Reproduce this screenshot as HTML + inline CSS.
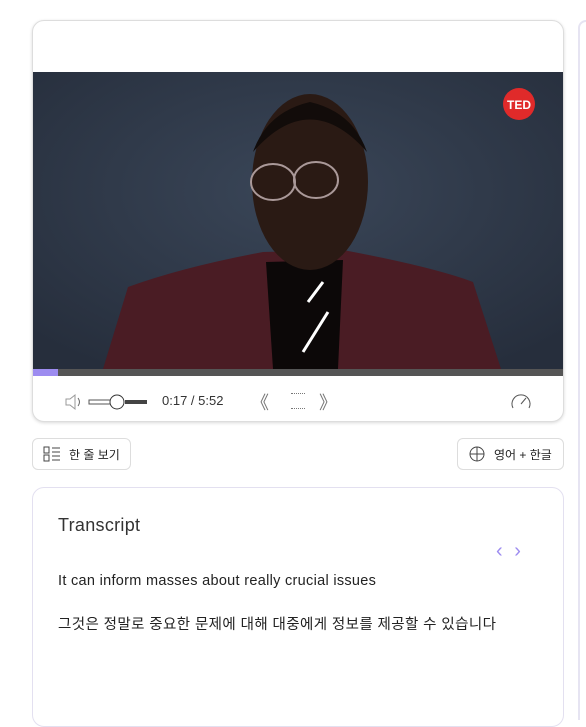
<!DOCTYPE html>
<html><head><meta charset="utf-8"><style>
*{margin:0;padding:0;box-sizing:border-box}
body{width:586px;height:702px;background:#fff;font-family:"Liberation Sans","Noto Sans CJK KR",sans-serif;position:relative;overflow:hidden;color:#222}
.card{position:absolute;left:32px;top:20px;width:532px;height:402px;border:1px solid #ddd;border-radius:12px;overflow:hidden;background:#fff;box-shadow:0 1px 3px rgba(0,0,0,.15)}
.vid{position:absolute;left:0;top:51px;width:530px;height:297px}
.prog{position:absolute;left:0;top:348px;width:530px;height:7px;background:#555}
.prog div{width:25px;height:7px;background:#9d8cf0}
.ctrl{position:absolute;top:370px;font-size:13px;color:#333}
.btn{position:absolute;top:438px;height:32px;border:1px solid #ddd;border-radius:6px;font-size:12px;display:flex;align-items:center;padding:0 10px;gap:8px;color:#222}
.tr{position:absolute;left:32px;top:487px;width:532px;height:240px;border:1px solid #e3e0f0;border-radius:12px}
.side{position:absolute;left:578px;top:20px;width:10px;height:700px;border-left:2px solid #e6e4f2;border-top:2px solid #e6e4f2;border-radius:8px 0 0 0}
</style></head><body>
<div class="side"></div>
<div class="card">
<svg class="vid" viewBox="0 0 530 297">
<defs><radialGradient id="bg" cx="0.5" cy="0.4" r="0.7"><stop offset="0" stop-color="#3a4658"/><stop offset="1" stop-color="#262e3c"/></radialGradient></defs>
<rect width="530" height="297" fill="url(#bg)"/>
<path d="M70 297 L95 215 Q150 195 230 180 L310 178 Q400 195 440 210 L468 297Z" fill="#4a1c24"/>
<path d="M233 190 L310 188 L305 297 L240 297Z" fill="#0c0808"/>
<ellipse cx="277" cy="110" rx="58" ry="88" fill="#2a1a14"/>
<path d="M220 80 Q277 15 334 80 Q320 40 277 30 Q234 40 220 80Z" fill="#120c0a"/>
<ellipse cx="240" cy="110" rx="22" ry="18" fill="none" stroke="#a99" stroke-width="2"/>
<ellipse cx="283" cy="108" rx="22" ry="18" fill="none" stroke="#a99" stroke-width="2"/>
<path d="M275 230 L290 210 M270 280 L295 240" stroke="#fff" stroke-width="3"/>
<circle cx="486" cy="32" r="16" fill="#e02a2a"/>
<text x="486" y="37" font-family="Liberation Sans" font-weight="bold" font-size="12" fill="#fff" text-anchor="middle">TED</text>
</svg>
<div class="prog"><div></div></div>
<svg style="position:absolute;left:30px;top:370px" width="90" height="22" viewBox="0 0 90 22">
<path d="M3 8h4l5-4v14l-5-4H3z" fill="none" stroke="#999"/><path d="M15 7q3 4 0 8" fill="none" stroke="#666"/>
<rect x="26" y="9" width="26" height="4" fill="none" stroke="#555"/><rect x="62" y="9" width="22" height="4" fill="#444"/>
<circle cx="54" cy="11" r="7" fill="#fff" stroke="#333"/></svg>
<div class="ctrl" style="left:129px;top:372px">0:17 / 5:52</div>
<div class="ctrl" style="left:218px;top:368px;font-size:18px;color:#777">《</div>
<div class="ctrl" style="left:258px;top:372px;width:14px;height:16px;border-top:1px dotted #777;border-bottom:1px dotted #777"></div>
<div class="ctrl" style="left:286px;top:368px;font-size:18px;color:#777">》</div>
<svg style="position:absolute;left:476px;top:369px" width="24" height="22"><path d="M4 18a9 9 0 1 1 16 0" fill="none" stroke="#555"/><path d="M12 14l5-6" stroke="#555"/></svg>
</div>
<div class="btn" style="left:32px;width:99px"><svg width="18" height="18"><rect x="1" y="2" width="5" height="6" fill="none" stroke="#444"/><rect x="1" y="10" width="5" height="6" fill="none" stroke="#444"/><path d="M9 3h8M9 7h8M9 11h8M9 15h8" stroke="#444"/></svg>한 줄 보기</div>
<div class="btn" style="left:457px;width:107px"><svg width="18" height="18"><circle cx="9" cy="9" r="7" fill="none" stroke="#444"/><path d="M2 9h14M9 2v14" stroke="#444"/></svg>영어 + 한글</div>
<div class="tr">
<div style="position:absolute;left:25px;top:27px;font-size:18px;color:#333;letter-spacing:.3px">Transcript</div>
<div style="position:absolute;left:463px;top:52px;font-size:20px;color:#9d8cf0;word-spacing:6px">‹ ›</div>
<div style="position:absolute;left:25px;top:85px;font-size:14.5px;letter-spacing:.3px">It can inform masses about really crucial issues</div>
<div style="position:absolute;left:25px;top:125px;font-size:14.5px;letter-spacing:.4px">그것은 정말로 중요한 문제에 대해 대중에게 정보를 제공할 수 있습니다</div>
</div>
</body></html>
